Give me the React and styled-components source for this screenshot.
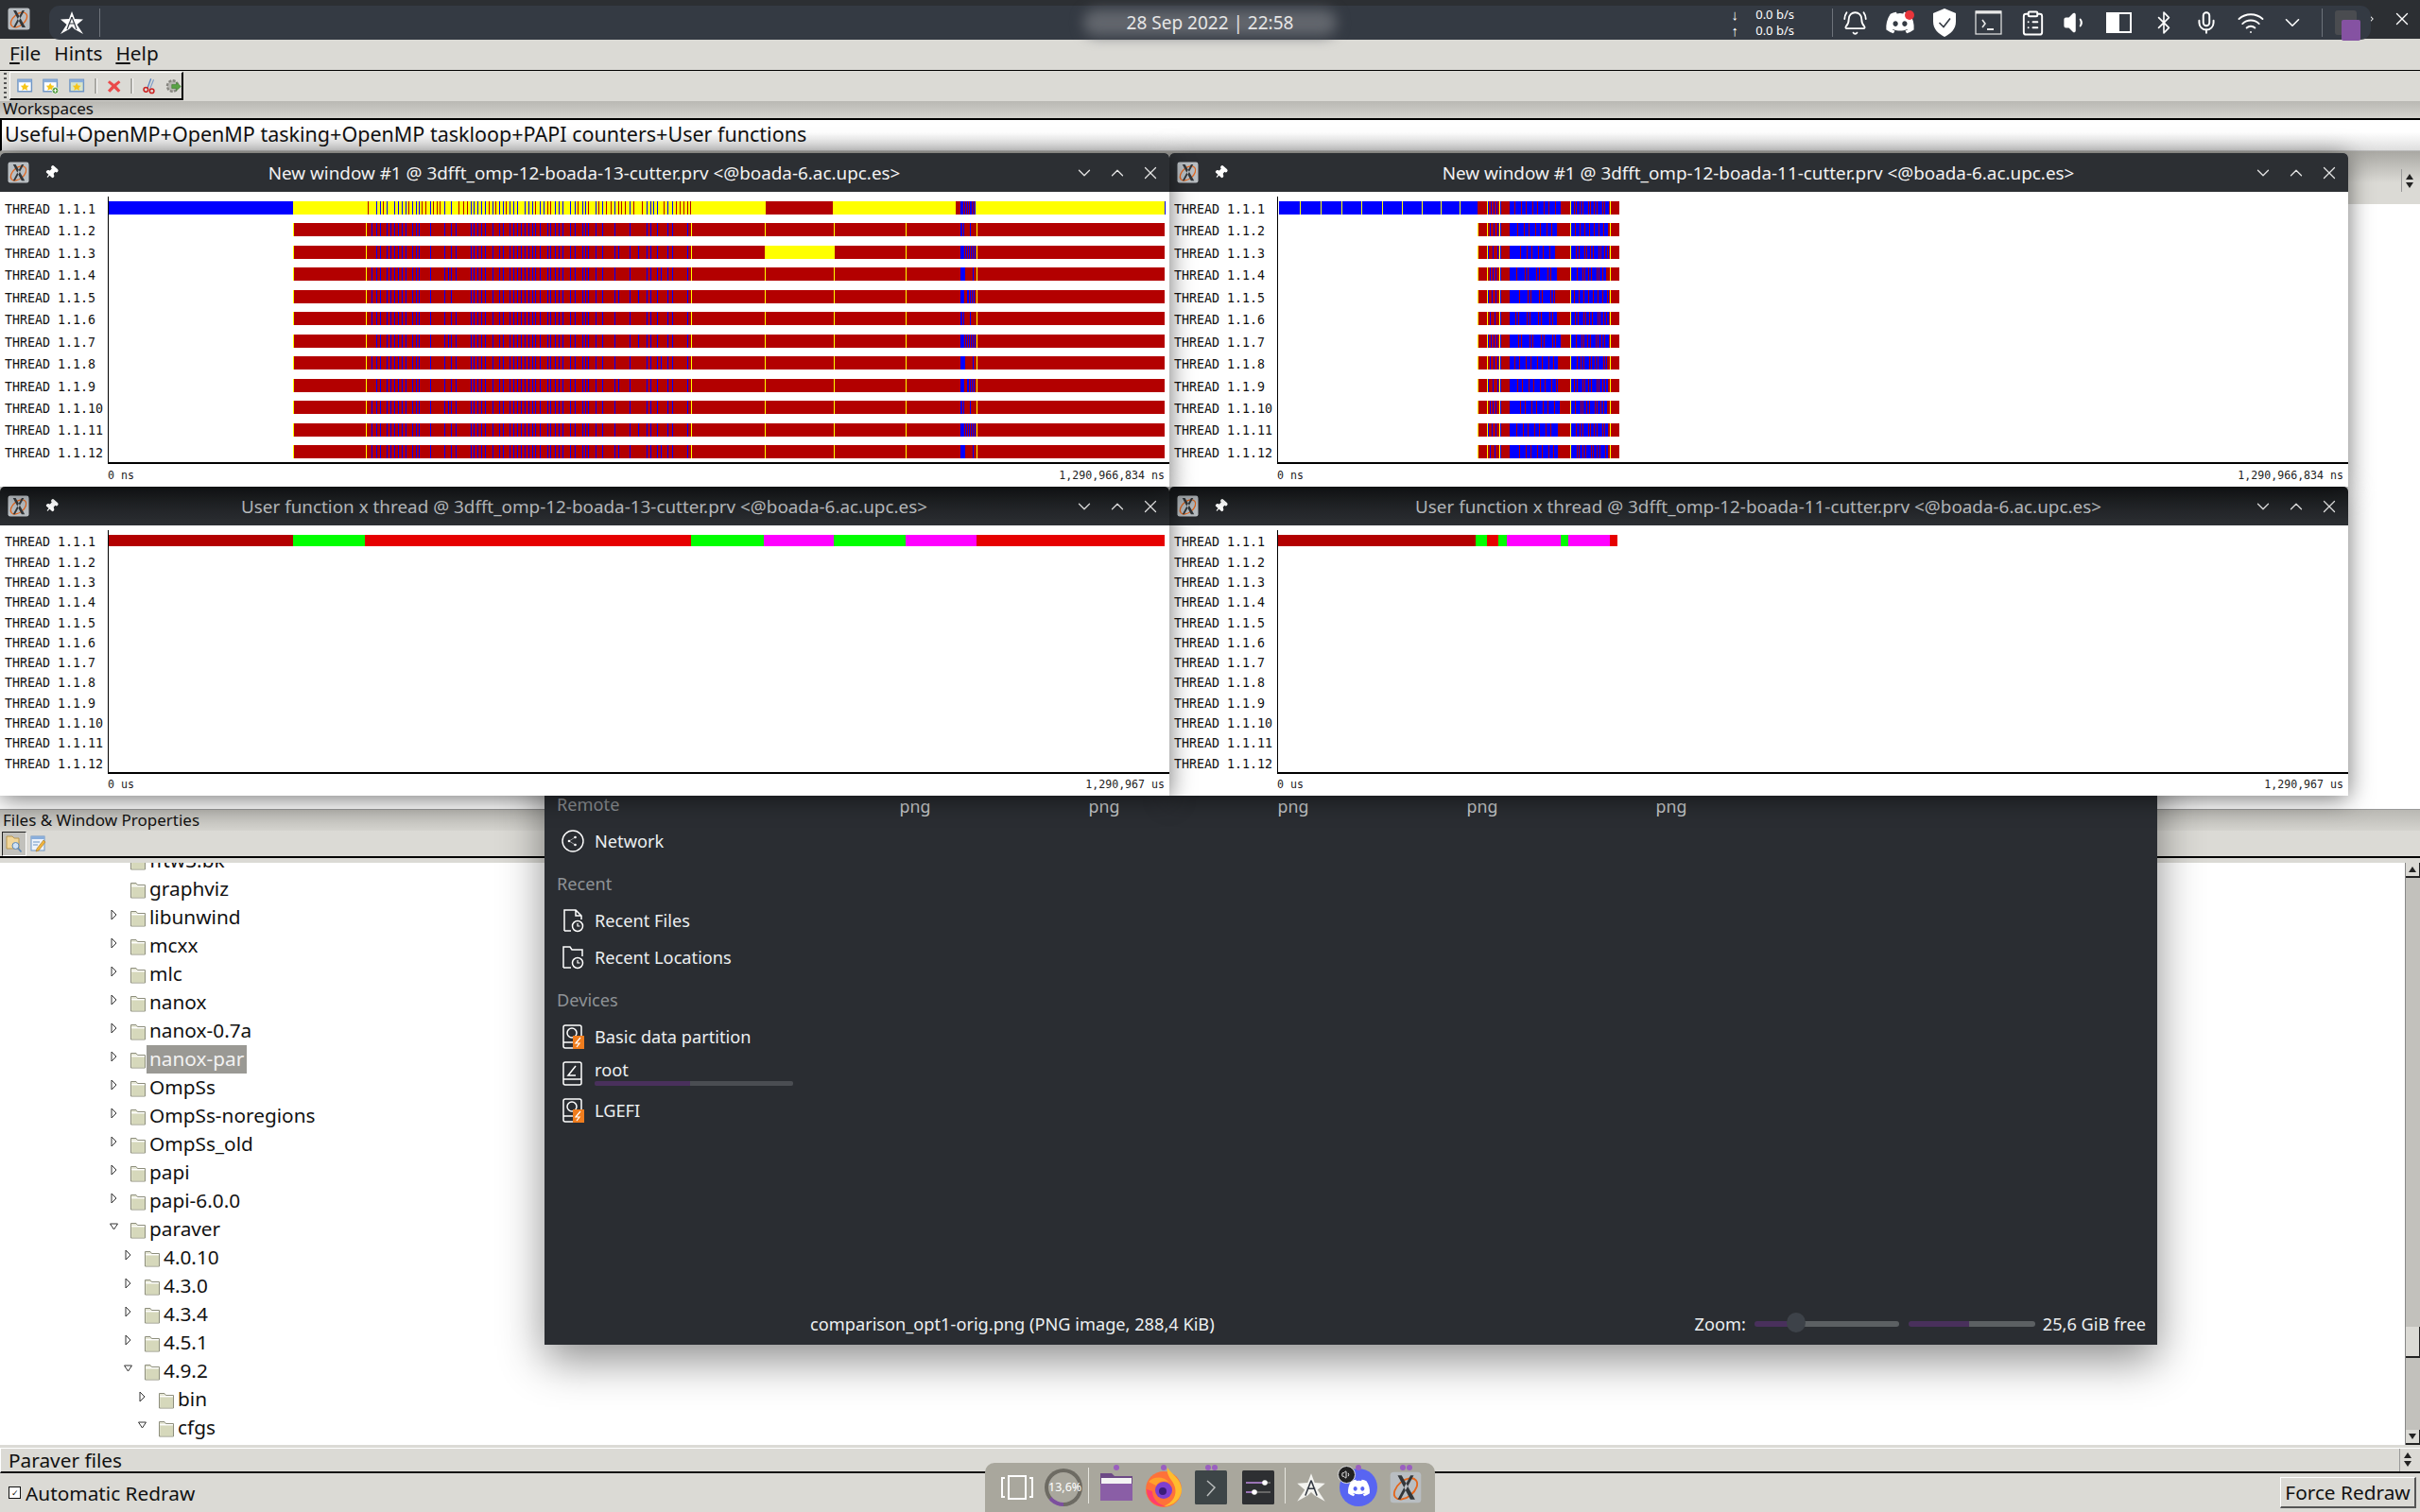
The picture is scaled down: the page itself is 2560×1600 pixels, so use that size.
import React from 'react';
import styled, { createGlobalStyle } from 'styled-components';
import {
  BellRing, ClipboardList, Volume1, Bluetooth, Mic, Wifi, ChevronDown, ChevronUp, ChevronRight, X, Pin,
} from 'lucide-react';
import { FaDiscord } from 'react-icons/fa';

const GlobalStyle = createGlobalStyle`
  html, body { margin: 0; padding: 0; background: #dbdad5; }
  body { font-family: "Noto Sans", sans-serif; color: #111; }
`;

const GREY = '#dbdad5';
const DARK_RED = '#b30000';
const BLUE = '#0000ff';
const YELLOW = '#ffff00';
const GREEN = '#00ff00';
const MAGENTA = '#ff00ff';
const RED = '#e60000';

/* ---------- desktop frame ---------- */

const Screen = styled.div`
  position: relative;
  width: 2560px;
  height: 1600px;
  overflow: hidden;
  display: flex;
  flex-direction: column;
  background: ${GREY};
`;

const AppTitle = styled.div`
  height: 41px;
  flex: none;
  background: #2c2f33;
  color: #fff;
  display: flex;
  align-items: center;
  justify-content: space-between;
  padding: 0 8px 2px 8px;
  box-sizing: border-box;
`;

const AppTitleGroup = styled.div`
  display: flex;
  align-items: center;
  gap: ${p => p.$gap}px;
`;

const MenuBar = styled.div`
  height: 34px;
  flex: none;
  display: flex;
  gap: 14px;
  align-items: center;
  padding: 0 0 4px 10px;
  font-size: 20.8px;
  border-bottom: 1px solid #000;
  box-sizing: border-box;
`;

const MenuItem = styled.span`
  &::first-letter { text-decoration: underline; }
  ${p => p.$plain && '&::first-letter { text-decoration: none; }'}
`;

const ToolRow = styled.div`
  height: 32px;
  flex: none;
  display: flex;
  align-items: flex-start;
  padding-left: 3px;
  box-sizing: border-box;
`;

const Grip = styled.div`
  width: 3px;
  height: 27px;
  margin: 2px 3px 0 1px;
  background: repeating-linear-gradient(to bottom, #555 0 2px, transparent 2px 5px);
`;

const HandleBox = styled.div`
  width: 184px;
  height: 30px;
  margin-top: 1px;
  display: flex;
  align-items: center;
  border-top: 1px solid #fff;
  border-left: 1px solid #fff;
  border-right: 2px solid #000;
  border-bottom: 2px solid #000;
  padding-left: 7px;
  box-sizing: border-box;
  gap: 10px;
`;

const ToolSep = styled.i`
  display: block;
  width: 2px;
  height: 16px;
  background: #aaa9a4;
  border-right: 1px solid #fff;
`;

const PaneLabel = styled.div`
  height: ${p => p.$h}px;
  flex: none;
  padding-left: 3px;
  font-size: 17px;
  line-height: ${p => p.$lh}px;
  background: linear-gradient(to bottom, #b9b8b3, #d4d3ce);
`;

const WorkspaceInput = styled.div`
  height: 35px;
  flex: none;
  box-sizing: border-box;
  border-top: 2px solid #000;
  border-left: 2px solid #000;
  border-bottom: 1px solid #bbb;
  padding-left: 3px;
  font-size: 21.5px;
  line-height: 30px;
  background: linear-gradient(to bottom, #fff 40%, #dedede);
`;

const SpinStrip = styled.div`
  height: 56px;
  flex: none;
  display: flex;
  justify-content: flex-end;
  align-items: flex-end;
  padding: 0 4px 13px 0;
  box-sizing: border-box;
  background: linear-gradient(to bottom, #a9a8a3, ${GREY} 60%);
`;

const SpinArrows = styled.div`
  width: 15px;
  height: 24px;
  border-left: 1px solid #999;
  display: flex;
  flex-direction: column;
  align-items: center;
  justify-content: center;
  gap: 3px;
`;

const Tri = styled.i`
  display: block;
  width: 0;
  height: 0;
  border-left: 4px solid transparent;
  border-right: 4px solid transparent;
  ${p => (p.$down ? 'border-top: 6px solid #222;' : 'border-bottom: 6px solid #222;')}
`;

const WindowList = styled.div`
  height: 641px;
  flex: none;
  box-sizing: border-box;
  background: #fff;
  border-bottom: 1px solid #999;
`;

const FilesTools = styled.div`
  height: 29px;
  flex: none;
  display: flex;
  align-items: center;
  gap: 4px;
  padding-left: 2px;
  box-sizing: border-box;
  border-bottom: 2px solid #000;
  background: ${GREY};
`;

const PressedTool = styled.div`
  width: 26px;
  height: 26px;
  display: flex;
  align-items: center;
  justify-content: center;
  background: #c2c1bc;
  box-sizing: border-box;
  border: 1px solid #222;
  border-right-color: #fff;
  border-bottom-color: #fff;
`;

const TreePane = styled.div`
  height: 616px;
  flex: none;
  display: flex;
  background: #fff;
  margin-top: 5px;
`;

const Tree = styled.div`
  flex: 1;
  overflow: hidden;
`;

const TreeList = styled.div`
  margin-top: -17.5px;
`;

const TreeRow = styled.div`
  height: 30px;
  display: flex;
  align-items: center;
  padding-left: ${p => 116 + p.$level * 15}px;
  font-size: 20.8px;
`;

const TreeToggle = styled.span`
  width: 22px;
  flex: none;
  display: flex;
  align-items: center;
  margin-top: -6px;
`;

const TreeName = styled.span`
  height: 30px;
  line-height: 29px;
  margin-left: 1px;
  padding: 0 3px;
  ${p => p.$selected && 'background: #9a9994; color: #f2f2f2;'}
`;

const ScrollBar = styled.div`
  width: 15px;
  flex: none;
  background: #c2c1bc;
  display: flex;
  flex-direction: column;
  justify-content: space-between;
  position: relative;
  border-left: 1px solid #888;
`;

const ScrollBtn = styled.div`
  height: 14px;
  background: ${GREY};
  border-bottom: 2px solid #222;
  border-right: 1px solid #222;
  display: flex;
  align-items: center;
  justify-content: center;
`;

const ScrollThumb = styled.div`
  position: absolute;
  left: 0;
  right: 0;
  top: 491px;
  height: 33px;
  background: ${GREY};
  border-bottom: 2px solid #222;
  border-right: 1px solid #222;
  box-sizing: border-box;
`;

const FilesBar = styled.div`
  height: 27px;
  flex: none;
  margin-top: 3px;
  border-top: 1px solid #fff;
  border-left: 1px solid #fff;
  border-bottom: 2px solid #111;
  box-sizing: border-box;
  display: flex;
  align-items: center;
  justify-content: space-between;
  padding: 0 6px 1px 8px;
  font-size: 20.8px;
`;

const StatusRow = styled.div`
  flex: 1;
  display: flex;
  align-items: center;
  justify-content: space-between;
  padding: 0 4px 0 9px;
`;

const CheckLabel = styled.label`
  display: flex;
  align-items: center;
  gap: 5px;
  font-size: 20.8px;
`;

const CheckBox = styled.span`
  width: 11px;
  height: 11px;
  border: 1px solid #111;
  background: #fff;
  display: flex;
  align-items: center;
  justify-content: center;
  font-size: 9px;
  line-height: 1;
`;

const PushButton = styled.button`
  width: 144px;
  height: 33px;
  padding: 0;
  font: 20.8px "Noto Sans", sans-serif;
  color: #111;
  background: ${GREY};
  border: 1px solid #fff;
  border-right: 2px solid #555;
  border-bottom: 2px solid #555;
`;

/* ---------- top panel ---------- */

const Panel = styled.div`
  position: absolute;
  z-index: 20;
  left: 52px;
  top: 6px;
  width: 2456px;
  height: 36px;
  border-radius: 11px;
  background: #343a43;
  color: #fff;
  display: grid;
  grid-template-columns: 1fr auto 1fr;
  align-items: center;
`;

const PanelLeft = styled.div`
  display: flex;
  align-items: center;
  gap: 16px;
  padding-left: 11px;
`;

const PanelSep = styled.i`
  display: block;
  width: 1px;
  height: 30px;
  background: #6d727a;
  ${p => p.$push && `margin-left: ${p.$push}px;`}
`;

const Clockface = styled.div`
  position: relative;
  width: 280px;
  height: 32px;
  display: flex;
  align-items: center;
  justify-content: center;
  font-size: 19px;
  color: #e6e6e6;
  &::before {
    content: '';
    position: absolute;
    inset: 2px 6px;
    border-radius: 14px;
    background: #62666d;
    filter: blur(7px);
  }
  span { position: relative; }
`;

const PanelRight = styled.div`
  display: flex;
  align-items: center;
  justify-content: flex-end;
  padding-right: 10px;
`;

const NetArrows = styled.div`
  font-size: 15px;
  line-height: 17px;
  color: #fff;
  text-align: center;
  width: 14px;
`;

const NetRates = styled.div`
  font-size: 13px;
  line-height: 17px;
  margin: 0 40px 0 15px;
  white-space: nowrap;
`;

const TraySlot = styled.span`
  width: ${p => p.$w || 47}px;
  height: 32px;
  display: flex;
  align-items: center;
  justify-content: center;
  position: relative;
`;

const Badge = styled.i`
  position: absolute;
  top: 3px;
  right: 8px;
  width: 10px;
  height: 10px;
  border-radius: 50%;
  background: #e8353b;
`;

const Pager = styled.span`
  position: relative;
  display: block;
  width: 28px;
  height: 34px;
  margin-left: 13px;
  &::before {
    content: '';
    position: absolute;
    left: 0;
    top: 4px;
    width: 23px;
    height: 26px;
    background: #4a4c50;
    border-radius: 3px;
  }
  &::after {
    content: '';
    position: absolute;
    left: 7px;
    top: 14px;
    width: 20px;
    height: 22px;
    background: #8552a2;
    border-radius: 2px;
  }
`;

/* ---------- timeline windows ---------- */

const TimelineWin = styled.section`
  position: absolute;
  z-index: ${p => p.$z};
  left: ${p => p.$left}px;
  top: ${p => p.$top}px;
  width: ${p => p.$width}px;
  background: #fff;
  box-shadow: 0 3px 26px rgba(0, 0, 0, 0.55);
  border-radius: 5px 5px 0 0;
`;

const TitleBar = styled.header`
  height: 41px;
  display: flex;
  align-items: center;
  padding: 0 8px;
  box-sizing: border-box;
  color: ${p => (p.$dim ? '#b9bcbf' : '#f2f2f2')};
  background: ${p => (p.$dim ? 'linear-gradient(to bottom, #17191b, #2c2f33)' : '#2c2f33')};
  font-size: 18.86px;
  border-radius: 5px 5px 0 0;
`;

const TitleIcons = styled.div`
  width: 72px;
  display: flex;
  align-items: center;
  gap: 16px;
  flex: none;
`;

const TitleText = styled.div`
  flex: 1;
  text-align: center;
  white-space: nowrap;
  margin-left: 20px;
`;

const TitleButtons = styled.div`
  width: 92px;
  display: flex;
  justify-content: space-between;
  flex: none;
  padding-right: 1px;
  color: #e4e4e4;
`;

const Plot = styled.div`
  display: grid;
  grid-template-columns: 114px 1fr;
  height: ${p => p.$height}px;
  padding-top: 5px;
  box-sizing: border-box;
`;

const Labels = styled.div`
  padding-top: ${p => p.$pad}px;
  font: 13.3px "DejaVu Sans Mono", monospace;
  color: #111;
`;

const ThreadLabel = styled.div`
  height: ${p => p.$h}px;
  line-height: ${p => p.$h}px;
  padding-left: 5px;
  white-space: nowrap;
`;

const ChartBox = styled.div`
  border-left: 1px solid #000;
  border-bottom: 2px solid #000;
  svg { display: block; }
`;

const AxisRow = styled.div`
  height: 24px;
  display: flex;
  justify-content: space-between;
  align-items: center;
  padding: 0 5px 0 114px;
  font: 11.6px "DejaVu Sans Mono", monospace;
  color: #222;
`;

/* ---------- file manager behind ---------- */

const FileManager = styled.section`
  position: absolute;
  z-index: 2;
  left: 576px;
  top: 700px;
  width: 1706px;
  height: 723px;
  background: #2a2d32;
  color: #eceff1;
  box-shadow: 0 16px 44px rgba(0, 0, 0, 0.45);
  display: flex;
  flex-direction: column;
`;

const FmBody = styled.div`
  flex: 1;
  display: grid;
  grid-template-columns: 224px 1fr;
`;

const Sidebar = styled.div`
  padding-top: 139px;
  font-size: 18.2px;
`;

const SideSection = styled.div`
  margin-bottom: 13.5px;
`;

const SideHeading = styled.div`
  height: 24px;
  line-height: 24px;
  padding-left: 13px;
  margin-bottom: 7.5px;
  color: #8e9296;
`;

const SideItem = styled.div`
  height: 39px;
  display: flex;
  align-items: center;
  gap: 11px;
  padding-left: 18px;
  white-space: nowrap;
`;

const SideIcon = styled.span`
  width: 24px;
  height: 26px;
  flex: none;
  display: flex;
  align-items: center;
  justify-content: center;
  position: relative;
  color: #fff;
`;

const SideMeter = styled.div`
  display: flex;
  flex-direction: column;
  flex: none;
  width: 210px;
  margin-top: -3px;
  line-height: 22px;
`;

const Meter = styled.div`
  height: 5px;
  margin-top: 1px;
  border-radius: 2px;
  background: linear-gradient(to right, #49305c ${p => p.$pct}%, #4a4d52 ${p => p.$pct}%);
`;

const FmGrid = styled.div`
  padding: 141px 0 0 68px;
  display: flex;
  align-items: flex-start;
  font-size: 17.8px;
  color: #c8cacc;
`;

const FmCell = styled.div`
  width: 200px;
  text-align: center;
  line-height: 24px;
`;

const FmStatus = styled.div`
  height: 44px;
  display: flex;
  align-items: center;
  justify-content: space-between;
  padding: 0 12px 0 281px;
  font-size: 18.2px;
`;

const ZoomGroup = styled.div`
  display: flex;
  align-items: center;
`;

const Slider = styled.div`
  position: relative;
  width: ${p => p.$w}px;
  height: 6px;
  margin: ${p => p.$m};
  border-radius: 3px;
  background: linear-gradient(to right, #49305c ${p => p.$pct}%, #5c6063 ${p => p.$pct}%);
`;

const SliderKnob = styled.i`
  position: absolute;
  top: -9px;
  left: 34px;
  width: 20px;
  height: 21px;
  border-radius: 50%;
  background: #3d4249;
`;

/* ---------- dock ---------- */

const Dock = styled.nav`
  position: absolute;
  z-index: 21;
  left: 1042px;
  bottom: 0;
  width: 476px;
  height: 52px;
  border-radius: 10px 10px 0 0;
  background: #a9a79d;
  display: flex;
  align-items: flex-end;
  padding: 0 0 2px 6px;
  box-sizing: border-box;
`;

const DockItem = styled.span`
  position: relative;
  width: ${p => p.$w || 50}px;
  height: 48px;
  flex: none;
  display: flex;
  align-items: center;
  justify-content: center;
  color: #fff;
`;

const DockDots = styled.span`
  position: absolute;
  top: 0;
  left: 0;
  right: 0;
  display: flex;
  justify-content: center;
  gap: 1px;
  i {
    display: block;
    width: 6px;
    height: 6px;
    border-radius: 50%;
    background: #9a5fc0;
  }
`;

const DockSep = styled.i`
  display: block;
  width: 1px;
  height: 38px;
  margin: 0 0 5px;
  background: #e6e5df;
  flex: none;
`;

const Donut = styled.span`
  width: 40px;
  height: 40px;
  border-radius: 50%;
  background: conic-gradient(from 180deg, #7c4f9e 0 14%, #6d6b63 14%);
  display: flex;
  align-items: center;
  justify-content: center;
  font-size: 12.5px;
  color: #fff;
  position: relative;
  span {
    position: relative;
    width: 32px;
    height: 32px;
    line-height: 32px;
    text-align: center;
    border-radius: 50%;
    background: #a9a79d;
    white-space: nowrap;
  }
`;

const DiscordDisc = styled.span`
  width: 40px;
  height: 40px;
  border-radius: 50%;
  background: #5865f2;
  display: flex;
  align-items: center;
  justify-content: center;
  color: #fff;
`;

const SmallDisc = styled.span`
  position: absolute;
  left: 3px;
  top: 1px;
  width: 17px;
  height: 17px;
  border-radius: 50%;
  background: #222;
  border: 1px solid #ddd;
  display: flex;
  align-items: center;
  justify-content: center;
`;

/* ---------- drawn icons ---------- */

const XLogo = ({ size = 24 }) => (
  <svg width={size} height={size} viewBox="0 0 24 24">
    <rect x="0.5" y="0.5" width="23" height="23" rx="2.5" fill="#b9bec2" />
    <ellipse cx="12" cy="13" rx="10" ry="6" fill="none" stroke="#e4661c" strokeWidth="1.3" transform="rotate(-40 12 13)" />
    <path d="M6 3 L9 3 L19 21 L15.5 21 Z M18 3 L15.6 3 L6 21 L8.2 21 Z" fill="#33373a" />
  </svg>
);

const StarLogo = ({ size = 26, color = '#fff' }) => (
  <svg width={size} height={size} viewBox="0 0 26 26">
    <path d="M13 1 L16 9 L25 9.5 L18.5 15 L25 25 L16 20 L13 17 L10 20 L1 25 L7.5 15 L1 9.5 L10 9 Z" fill={color} />
    <path d="M13 7 L8 20 M13 7 L18 20 M9.5 14 L16.5 14" stroke="#343a43" strokeWidth="1.2" fill="none" />
  </svg>
);

const PinIcon = styled(Pin)`
  transform: rotate(42deg);
  fill: #fff;
  color: #fff;
`;

const Shield = () => (
  <svg width="26" height="32" viewBox="0 0 26 32">
    <path d="M13 1 L25 6 V15 C25 23 19 28 13 31 C7 28 1 23 1 15 V6 Z" fill="#fff" />
    <path d="M7.5 16 L12 20.5 L19 11.5" fill="none" stroke="#343a43" strokeWidth="1.6" />
  </svg>
);

const TermTray = () => (
  <svg width="30" height="28" viewBox="0 0 30 28" fill="none" stroke="#e8e8e8">
    <rect x="1" y="2" width="27" height="24" strokeWidth="1.2" />
    <path d="M1 3 H28" strokeWidth="3" />
    <path d="M8 11 L11 15 L8 19" strokeWidth="1.6" />
    <path d="M13 21 H20" strokeWidth="2" />
  </svg>
);

const BatteryTray = () => (
  <svg width="28" height="22" viewBox="0 0 28 22">
    <rect x="1" y="1" width="25" height="20" fill="#343a43" stroke="#fff" strokeWidth="2" />
    <rect x="2" y="2" width="12" height="18" fill="#fff" />
  </svg>
);

const WindowStar = ({ add, list }) => (
  <svg width="18" height="18" viewBox="0 0 18 18">
    <rect x="1" y="2" width="15" height="13" fill={list ? '#d9e4c8' : '#fff'} stroke="#6d94c4" strokeWidth="1.5" />
    <rect x="1" y="2" width="15" height="3" fill="#8aaedb" />
    <path d="M8.5 5.5 L10 8.5 L13 8.8 L10.8 11 L11.5 14 L8.5 12.5 L5.5 14 L6.2 11 L4 8.8 L7 8.5 Z" fill="#f5c518" />
    {add && <circle cx="14" cy="14" r="3.6" fill="#4f9a3c" stroke="#fff" strokeWidth="0.8" />}
    {add && <path d="M14 12 V16 M12 14 H16" stroke="#fff" strokeWidth="1" />}
  </svg>
);

const RedCross = () => (
  <svg width="16" height="16" viewBox="0 0 16 16">
    <path d="M3 2 L8 6 L13 2 L15 4 L10.5 8 L15 13 L12.5 15 L8 10.5 L3.5 15 L1 13 L5.5 8 L1 4 Z" fill="#ea4a4a" />
  </svg>
);

const Scissors = () => (
  <svg width="14" height="18" viewBox="0 0 14 18" fill="none">
    <path d="M9 1 L5 12" stroke="#5a84c0" strokeWidth="1.4" />
    <path d="M12 2 L8 12" stroke="#7d9cc9" strokeWidth="1.2" />
    <circle cx="3.5" cy="13" r="2.4" stroke="#c22" strokeWidth="1.6" />
    <circle cx="10" cy="14.5" r="2.4" stroke="#c22" strokeWidth="1.6" />
  </svg>
);

const GearArrow = () => (
  <svg width="18" height="18" viewBox="0 0 18 18">
    <circle cx="8" cy="9" r="6" fill="#b8b7b2" stroke="#86857f" strokeWidth="2.4" strokeDasharray="3 1.6" />
    <path d="M7 7.5 H12 V5 L17 9.5 L12 14 V11.5 H7 Z" fill="#59a345" stroke="#3d7a30" strokeWidth="0.6" />
  </svg>
);

const FindFolder = () => (
  <svg width="18" height="20" viewBox="0 0 18 20">
    <path d="M1 2 H7 L9 4 H14 V15 H1 Z" fill="#f2d79a" stroke="#b9974f" />
    <circle cx="10.5" cy="12" r="3.5" fill="#cfe3f7" stroke="#5c87b5" />
    <path d="M13 14.5 L16.5 18.5" stroke="#5c87b5" strokeWidth="1.6" />
  </svg>
);

const EditWindow = () => (
  <svg width="18" height="20" viewBox="0 0 18 20">
    <rect x="1" y="2" width="14" height="15" fill="#eef3fa" stroke="#6d94c4" />
    <rect x="1" y="2" width="14" height="3" fill="#8aaedb" />
    <path d="M3 8 H10 M3 11 H8" stroke="#6d94c4" />
    <path d="M14 6 L16 8 L9 17 L6 18 L7 15 Z" fill="#f0b43c" stroke="#a5762a" strokeWidth="0.6" />
  </svg>
);

const TreeFolder = () => (
  <svg width="16" height="20" viewBox="0 0 16 20">
    <path d="M0.5 3.5 H6 L7.5 5.5 H15.5 V19 H0.5 Z" fill="#e6e7d6" stroke="#8d8e7c" />
    <path d="M1 6.5 H15" stroke="#fff" />
    <path d="M1.5 8 H15 V18.5 H1.5 Z" fill="#d6d8bb" />
  </svg>
);

const Expander = ({ open }) => (
  <svg width="9" height="12" viewBox="0 0 9 12" fill="#fff" stroke="#333">
    {open
      ? <path d="M0.5 3 H8.5 L4.5 9 Z" />
      : <path d="M2 1 L7 6 L2 11 Z" />}
  </svg>
);

const NetworkGlyph = () => (
  <svg width="24" height="26" viewBox="0 0 24 26" fill="none" stroke="#fff" strokeWidth="1.4">
    <circle cx="12" cy="13" r="11" />
    <circle cx="8" cy="13" r="1.3" fill="#fff" stroke="none" />
    <circle cx="14.5" cy="9" r="1.3" fill="#fff" stroke="none" />
    <circle cx="14.5" cy="17" r="1.3" fill="#fff" stroke="none" />
    <path d="M8 13 L14.5 9 M8 13 L14.5 17" strokeWidth="0.5" />
  </svg>
);

const RecentFile = ({ folder }) => (
  <svg width="24" height="26" viewBox="0 0 24 26" fill="none" stroke="#fff" strokeWidth="1.5">
    {folder
      ? <path d="M2 24 V2 H9 L11 5 H22 V12 M2 24 H10" />
      : <path d="M3 24 V2 H15 L21 8 V12 M3 24 H10 M15 2 V8 H21" />}
    <circle cx="17" cy="19" r="5.5" />
    <path d="M17 16 V19 H19.5" strokeWidth="1.2" />
  </svg>
);

const DriveIcon = ({ warn, slash }) => (
  <svg width="24" height="26" viewBox="0 0 24 26" fill="none" stroke="#fff" strokeWidth="1.5">
    <rect x="2" y="1" width="19" height="24" rx="2" />
    <path d="M2 19 H21" />
    {slash && <path d="M15 5 L7 15 H15" />}
    {warn && <circle cx="11" cy="9" r="5" />}
    {warn && <rect x="12" y="12" width="12" height="14" fill="#f07d1e" stroke="none" />}
    {warn && <path d="M20 14 L15 20 H19 L16 24" stroke="#fff" strokeWidth="1.2" />}
  </svg>
);

const DockFolder = () => (
  <svg width="36" height="36" viewBox="0 0 36 36">
    <path d="M1 3 H13 L16 6 H35 V32 H1 Z" fill="#6d4a86" />
    <path d="M2 8 H34 V14 H2 Z" fill="#f4f4f4" />
    <path d="M1 14 H35 V32 H1 Z" fill="#8a5ea6" />
  </svg>
);

const Firefox = () => (
  <svg width="40" height="44" viewBox="0 0 40 44">
    <circle cx="20" cy="24" r="19" fill="#ff7139" />
    <path d="M24 1 C28 8 38 12 39 24 C39 34 30 42 20 42 C30 38 34 30 32 22 C30 14 22 10 24 1 Z" fill="#ffbd2e" />
    <path d="M2 24 C2 36 12 43 22 42 C14 40 8 34 8 26 Z" fill="#ff3d6e" />
    <circle cx="20" cy="25" r="9" fill="#7d3fd1" />
    <path d="M4 16 C10 10 20 10 26 17 C20 14 14 16 12 20 Z" fill="#ffa12b" />
    <circle cx="19" cy="26" r="4" fill="#3a1d7a" />
  </svg>
);

const TermTile = () => (
  <svg width="34" height="36" viewBox="0 0 34 36">
    <rect x="0" y="0" width="34" height="36" rx="1.5" fill="#3d4547" />
    <path d="M13 11 L21 18 L13 27" fill="none" stroke="#b9bcbc" strokeWidth="1.5" />
  </svg>
);

const SliderTile = () => (
  <svg width="34" height="36" viewBox="0 0 34 36">
    <rect x="0" y="0" width="34" height="36" rx="1.5" fill="#2d2f32" />
    <path d="M4 13 H30 M4 23 H30" stroke="#666" strokeWidth="2" />
    <path d="M4 13 H24 M4 23 H13" stroke="#9a74b5" strokeWidth="2" />
    <circle cx="24" cy="13" r="2.8" fill="#fff" />
    <circle cx="13" cy="23" r="2.8" fill="#fff" />
  </svg>
);

const DesktopIcon = () => (
  <svg width="36" height="28" viewBox="0 0 36 28" fill="none" stroke="#fff" strokeWidth="2">
    <rect x="9" y="2" width="18" height="24" />
    <path d="M5 4 H2 V24 H5 M31 4 H34 V24 H31" />
  </svg>
);

/* ---------- chart data (screen coordinates) ---------- */

const COMMON = [280, 295, 307, 328, 340, 352, 364, 376, 388, 409, 421, 430, 466, 511, 532, 547, 595, 604, 616, 628, 640, 664, 685, 697, 718, 730, 742, 754, 766, 778, 790, 799, 814, 838, 847, 862, 874, 886, 910, 925, 949, 958, 967, 991, 1012, 1051, 1099, 1153, 1165, 1186, 1219, 1234, 1282];
const TOP_BLUE = [295, 307, 328, 352, 364, 376, 388, 409, 421, 430, 466, 511, 532, 595, 604, 616, 628, 640, 664, 685, 697, 718, 730, 742, 766, 778, 790, 814, 826, 862, 874, 886, 910, 925, 949, 958, 991, 1012, 1051, 1099, 1153, 1165, 1174, 1186, 1219, 1234];
const TOP_RED = [268, 316, 397, 439, 451, 475, 487, 496, 556, 571, 583, 652, 673, 706, 799, 838, 847, 934, 967, 1000, 1024, 1039, 1063, 1072, 1084, 1111, 1138, 1207, 1246, 1258, 1270, 1282, 1291];

const ROW_EXTRA = [
  { drop: [], add: [] },
  { drop: [280], add: [1063, 1126] },
  { drop: [], add: [523, 1198] },
  { drop: [547], add: [1126, 1063] },
  { drop: [], add: [] },
  { drop: [280], add: [523, 1126] },
  { drop: [], add: [1198] },
  { drop: [280], add: [1063] },
  { drop: [], add: [523] },
  { drop: [], add: [1126] },
  { drop: [], add: [1063, 1198] },
  { drop: [], add: [1063, 1126] },
];

const CLUSTERS = [
  [[1016, 2], [1019, 1], [1026, 1]],
  [[1016, 4], [1021, 1], [1023, 1], [1025, 1], [1027, 1], [1029, 1], [1031, 1]],
  [[1016, 2], [1018, 3], [1029, 1]],
  [[1016, 4], [1023, 2], [1026, 1], [1028, 1], [1030, 1]],
];

const scr = px => Math.round(300 + px / 3);
const ROWS1 = [213, 236, 260, 283, 307, 330, 354, 377, 401, 424, 448, 471];

const win1Rects = () => {
  const out = [];
  const r = (x, y, w, h, fill) => out.push({ x, y, w, h, fill });
  // first thread: mostly yellow with stripes
  r(115, 213, 195, 14, BLUE);
  r(310, 213, 922, 14, YELLOW);
  r(810, 213, 71, 14, DARK_RED);
  r(1011, 213, 21, 14, DARK_RED);
  TOP_BLUE.forEach(p => r(scr(p), 213, 1, 14, BLUE));
  TOP_RED.forEach(p => r(scr(p), 213, 1, 14, DARK_RED));
  [[1016, 3], [1020, 1], [1022, 1], [1024, 1], [1026, 2], [1029, 1], [1031, 1]].forEach(([x, w]) => r(x, 213, w, 14, BLUE));
  r(1232, 213, 1, 14, BLUE);
  ROWS1.slice(1).forEach((y, i) => {
    r(310, y, 922, 14, DARK_RED);
    [310, 387, 731, 809, 882, 958, 1033].forEach(x => r(x, y, 1, 14, YELLOW));
    const extra = ROW_EXTRA[i];
    COMMON.filter(p => !extra.drop.includes(p)).concat(extra.add).forEach(p => r(scr(p), y, 1, 14, BLUE));
    CLUSTERS[i % 4].forEach(([x, w]) => r(x, y, w, 14, BLUE));
  });
  r(809, 260, 73, 14, YELLOW);
  return out;
};

const END_A = [1651, 1647, 1645, 1647, 1645, 1647, 1651, 1648, 1648, 1650, 1648, 1648];
const END_B = [1702, 1701, 1702, 1699, 1702, 1702, 1702, 1700, 1701, 1700, 1701, 1701];

const win2Rects = () => {
  const out = [];
  const r = (x, y, w, h, fill) => out.push({ x, y, w, h, fill });
  r(1353, 213, 210, 14, BLUE);
  [1375, 1397, 1419, 1440, 1462, 1483, 1504, 1524, 1544].forEach(x => r(x, 213, 1, 14, YELLOW));
  ROWS1.forEach((y, i) => {
    r(1563, y, 150, 14, DARK_RED);
    r(1597, y, END_A[i] - 1597, 14, BLUE);
    r(1662, y, END_B[i] - 1662, 14, BLUE);
    if (i > 0) r(1563, y, 1, 14, YELLOW);
    [1573, 1586, 1661, 1703].forEach(x => r(x, y, 1, 14, YELLOW));
    // thin stripes, a little different on every thread
    for (let x = 1574 + (i % 2) * 2; x < 1585; x += 3 + (i % 3)) r(x, y, 1, 14, BLUE);
    r(1587, y, 1, 14, BLUE);
    for (let x = 1602 + (i * 3) % 7; x < END_A[i] - 1; x += 3 + ((x + i) % 4) * 2) r(x, y, 1, 14, DARK_RED);
    for (let x = 1665 + (i * 5) % 4; x < END_B[i] - 1; x += 2 + ((x + i * 2) % 5)) r(x, y, 1, 14, DARK_RED);
  });
  return out;
};

const bar = (y, h, segs) => segs.map(([x, end, fill]) => ({ x, y, w: end - x, h, fill }));

const WIN3_SEGS = [[115, 310, DARK_RED], [310, 386, GREEN], [386, 731, RED], [731, 808, GREEN], [808, 882, MAGENTA], [882, 958, GREEN], [958, 1033, MAGENTA], [1033, 1232, RED]];
const WIN4_SEGS = [[1352, 1561, DARK_RED], [1561, 1573, GREEN], [1573, 1585, RED], [1585, 1594, GREEN], [1594, 1651, MAGENTA], [1651, 1659, GREEN], [1659, 1703, MAGENTA], [1703, 1711, RED]];

const Chart = ({ x0, y0, w, h, rects }) => (
  <svg width={w} height={h} viewBox={`${x0} ${y0} ${w} ${h}`} shapeRendering="crispEdges">
    {rects.map((r, i) => <rect key={i} x={r.x} y={r.y} width={r.w} height={r.h} fill={r.fill} />)}
  </svg>
);

const THREADS = Array.from({ length: 12 }, (_, i) => `THREAD 1.1.${i + 1}`);

const Timeline = ({ left, top, width, z, dim, title, plotH, rowH, pad, rects, endLabel, startLabel }) => (
  <TimelineWin $left={left} $top={top} $width={width} $z={z}>
    <TitleBar $dim={dim}>
      <TitleIcons>
        <XLogo size={23} />
        <PinIcon size={15} />
      </TitleIcons>
      <TitleText>{title}</TitleText>
      <TitleButtons>
        <ChevronDown size={22} strokeWidth={1.4} />
        <ChevronUp size={22} strokeWidth={1.4} />
        <X size={22} strokeWidth={1.4} />
      </TitleButtons>
    </TitleBar>
    <Plot $height={plotH}>
      <Labels $pad={pad}>
        {THREADS.map(t => <ThreadLabel key={t} $h={rowH}>{t}</ThreadLabel>)}
      </Labels>
      <ChartBox>
        <Chart x0={left + 115} y0={top + 46} w={width - 115} h={plotH - 7} rects={rects} />
      </ChartBox>
    </Plot>
    <AxisRow>
      <span>{startLabel}</span>
      <span>{endLabel}</span>
    </AxisRow>
  </TimelineWin>
);

const TREE = [
  { name: 'fftw3.bk', level: 0 },
  { name: 'graphviz', level: 0 },
  { name: 'libunwind', level: 0, toggle: 'closed' },
  { name: 'mcxx', level: 0, toggle: 'closed' },
  { name: 'mlc', level: 0, toggle: 'closed' },
  { name: 'nanox', level: 0, toggle: 'closed' },
  { name: 'nanox-0.7a', level: 0, toggle: 'closed' },
  { name: 'nanox-par', level: 0, toggle: 'closed', selected: true },
  { name: 'OmpSs', level: 0, toggle: 'closed' },
  { name: 'OmpSs-noregions', level: 0, toggle: 'closed' },
  { name: 'OmpSs_old', level: 0, toggle: 'closed' },
  { name: 'papi', level: 0, toggle: 'closed' },
  { name: 'papi-6.0.0', level: 0, toggle: 'closed' },
  { name: 'paraver', level: 0, toggle: 'open' },
  { name: '4.0.10', level: 1, toggle: 'closed' },
  { name: '4.3.0', level: 1, toggle: 'closed' },
  { name: '4.3.4', level: 1, toggle: 'closed' },
  { name: '4.5.1', level: 1, toggle: 'closed' },
  { name: '4.9.2', level: 1, toggle: 'open' },
  { name: 'bin', level: 2, toggle: 'closed' },
  { name: 'cfgs', level: 2, toggle: 'open' },
];

export default function App() {
  return (
    <Screen>
      <GlobalStyle />

      <AppTitle>
        <XLogo size={24} />
        <AppTitleGroup $gap={13}>
          <ChevronRight size={18} strokeWidth={1.4} />
          <X size={22} strokeWidth={1.4} />
        </AppTitleGroup>
      </AppTitle>
      <MenuBar>
        <MenuItem>File</MenuItem>
        <MenuItem $plain>Hints</MenuItem>
        <MenuItem>Help</MenuItem>
      </MenuBar>
      <ToolRow>
        <Grip />
        <HandleBox>
          <WindowStar />
          <WindowStar add />
          <WindowStar list />
          <ToolSep />
          <RedCross />
          <ToolSep />
          <Scissors />
          <GearArrow />
        </HandleBox>
      </ToolRow>
      <PaneLabel $h={18} $lh={15}>Workspaces</PaneLabel>
      <WorkspaceInput>Useful+OpenMP+OpenMP tasking+OpenMP taskloop+PAPI counters+User functions</WorkspaceInput>
      <SpinStrip>
        <SpinArrows><Tri /><Tri $down /></SpinArrows>
      </SpinStrip>
      <WindowList />
      <PaneLabel $h={22} $lh={21}>Files &amp; Window Properties</PaneLabel>
      <FilesTools>
        <PressedTool><FindFolder /></PressedTool>
        <EditWindow />
      </FilesTools>
      <TreePane>
        <Tree>
          <TreeList>
            {TREE.map(n => (
              <TreeRow key={n.name} $level={n.level}>
                <TreeToggle>{n.toggle && <Expander open={n.toggle === 'open'} />}</TreeToggle>
                <TreeFolder />
                <TreeName $selected={n.selected}>{n.name}</TreeName>
              </TreeRow>
            ))}
          </TreeList>
        </Tree>
        <ScrollBar>
          <ScrollBtn><Tri /></ScrollBtn>
          <ScrollThumb />
          <ScrollBtn><Tri $down /></ScrollBtn>
        </ScrollBar>
      </TreePane>
      <FilesBar>
        <span>Paraver files</span>
        <SpinArrows><Tri /><Tri $down /></SpinArrows>
      </FilesBar>
      <StatusRow>
        <CheckLabel>
          <CheckBox>✓</CheckBox>
          Automatic Redraw
        </CheckLabel>
        <PushButton>Force Redraw</PushButton>
      </StatusRow>

      <FileManager>
        <FmBody>
          <Sidebar>
            <SideSection>
              <SideHeading>Remote</SideHeading>
              <SideItem>
                <SideIcon><NetworkGlyph /></SideIcon>
                Network
              </SideItem>
            </SideSection>
            <SideSection>
              <SideHeading>Recent</SideHeading>
              <SideItem><SideIcon><RecentFile /></SideIcon>Recent Files</SideItem>
              <SideItem><SideIcon><RecentFile folder /></SideIcon>Recent Locations</SideItem>
            </SideSection>
            <SideSection>
              <SideHeading>Devices</SideHeading>
              <SideItem><SideIcon><DriveIcon warn /></SideIcon>Basic data partition</SideItem>
              <SideItem>
                <SideIcon><DriveIcon slash /></SideIcon>
                <SideMeter>
                  root
                  <Meter $pct={48} />
                </SideMeter>
              </SideItem>
              <SideItem><SideIcon><DriveIcon warn /></SideIcon>LGEFI</SideItem>
            </SideSection>
          </Sidebar>
          <FmGrid>
            {[0, 1, 2, 3, 4].map(i => <FmCell key={i}>png</FmCell>)}
          </FmGrid>
        </FmBody>
        <FmStatus>
          <span>comparison_opt1-orig.png (PNG image, 288,4 KiB)</span>
          <ZoomGroup>
            <span>Zoom:</span>
            <Slider $w={153} $m="0 10px 0 9px" $pct={30}><SliderKnob /></Slider>
            <Slider $w={134} $m="0 8px 0 0" $pct={48} />
            <span>25,6 GiB free</span>
          </ZoomGroup>
        </FmStatus>
      </FileManager>

      <Timeline left={1237} top={162} width={1247} z={4} title="New window #1 @ 3dfft_omp-12-boada-11-cutter.prv <@boada-6.ac.upc.es>" plotH={288} rowH={23.45} pad={2} rects={win2Rects()} startLabel="0 ns" endLabel="1,290,966,834 ns" />
      <Timeline left={1237} top={515} width={1247} z={3} dim title="User function x thread @ 3dfft_omp-12-boada-11-cutter.prv <@boada-6.ac.upc.es>" plotH={262} rowH={21.3} pad={2.4} rects={bar(566, 12, WIN4_SEGS)} startLabel="0 us" endLabel="1,290,967 us" />
      <Timeline left={0} top={515} width={1237} z={5} dim title="User function x thread @ 3dfft_omp-12-boada-13-cutter.prv <@boada-6.ac.upc.es>" plotH={262} rowH={21.3} pad={2.4} rects={bar(566, 12, WIN3_SEGS)} startLabel="0 us" endLabel="1,290,967 us" />
      <Timeline left={0} top={162} width={1237} z={6} title="New window #1 @ 3dfft_omp-12-boada-13-cutter.prv <@boada-6.ac.upc.es>" plotH={288} rowH={23.45} pad={2} rects={win1Rects()} startLabel="0 ns" endLabel="1,290,966,834 ns" />

      <Panel>
        <PanelLeft>
          <StarLogo />
          <PanelSep />
        </PanelLeft>
        <Clockface><span>28 Sep 2022 | 22:58</span></Clockface>
        <PanelRight>
          <NetArrows>↓<br />↑</NetArrows>
          <NetRates>0.0 b/s<br />0.0 b/s</NetRates>
          <PanelSep />
          <TraySlot><BellRing size={27} strokeWidth={1.6} /></TraySlot>
          <TraySlot><FaDiscord size={32} /><Badge /></TraySlot>
          <TraySlot><Shield /></TraySlot>
          <TraySlot><TermTray /></TraySlot>
          <TraySlot><ClipboardList size={29} strokeWidth={1.6} /></TraySlot>
          <TraySlot $w={44}><Volume1 size={28} fill="#fff" strokeWidth={1.6} /></TraySlot>
          <TraySlot><BatteryTray /></TraySlot>
          <TraySlot><Bluetooth size={26} strokeWidth={1.5} /></TraySlot>
          <TraySlot $w={44}><Mic size={26} strokeWidth={1.8} /></TraySlot>
          <TraySlot $w={50}><Wifi size={30} strokeWidth={1.5} /></TraySlot>
          <TraySlot $w={38}><ChevronDown size={26} strokeWidth={1.5} /></TraySlot>
          <PanelSep $push={12} />
          <Pager />
        </PanelRight>
      </Panel>

      <Dock>
        <DockItem $w={56}><DesktopIcon /></DockItem>
        <DockItem $w={42}><Donut><span>13,6%</span></Donut></DockItem>
        <DockItem $w={10}><DockSep /></DockItem>
        <DockItem><DockDots><i /></DockDots><DockFolder /></DockItem>
        <DockItem><DockDots><i /></DockDots><Firefox /></DockItem>
        <DockItem><DockDots><i /><i /></DockDots><TermTile /></DockItem>
        <DockItem><SliderTile /></DockItem>
        <DockItem $w={6}><DockSep /></DockItem>
        <DockItem><StarLogo size={32} color="#f4f4f0" /></DockItem>
        <DockItem>
          <DockDots><i /></DockDots>
          <DiscordDisc><FaDiscord size={25} /></DiscordDisc>
          <SmallDisc><Volume1 size={11} /></SmallDisc>
        </DockItem>
        <DockItem><DockDots><i /><i /></DockDots><XLogo size={34} /></DockItem>
      </Dock>
    </Screen>
  );
}
